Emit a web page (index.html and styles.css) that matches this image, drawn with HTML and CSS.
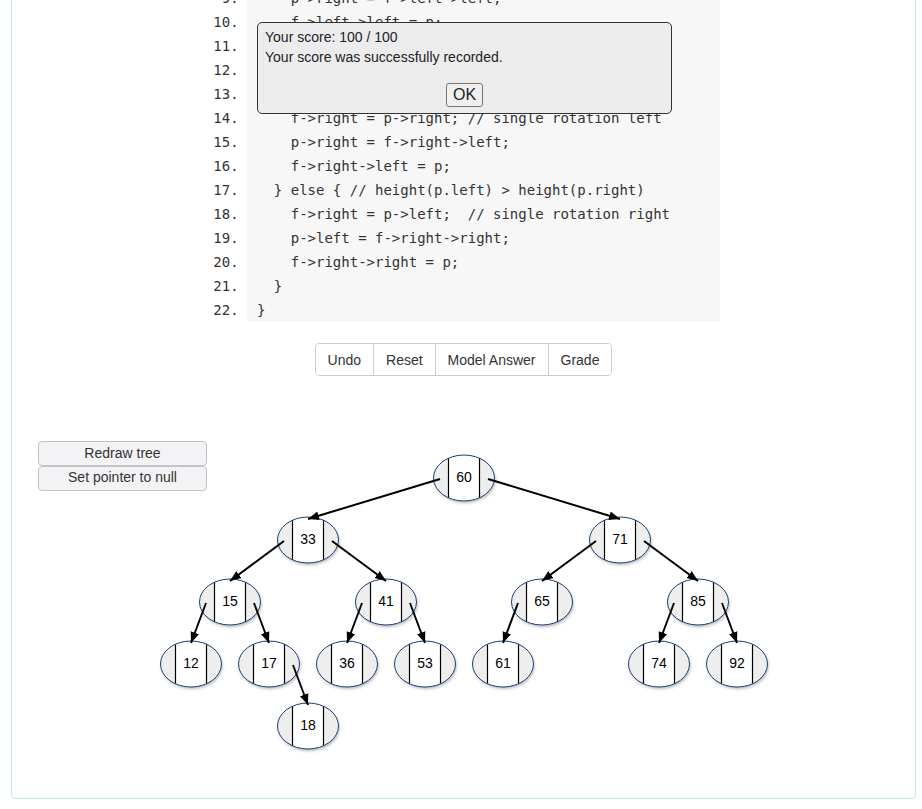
FILE: index.html
```html
<!DOCTYPE html>
<html lang="en">
<head>
  <meta charset="UTF-8" />
  <title>AVL Rotation Exercise</title>
  <link rel="stylesheet" href="styles.css">
</head>
<body>
  <div class="container">
    <ol class="code">
      <li>void rebalance(Node *f, Node *p) {</li>
      <li>  // p is the unbalanced child of f</li>
      <li>  if (p == f->left) {</li>
      <li>    f->left = p->right;  // single rotation left</li>
      <li>    p->right = f->left->left;</li>
      <li>    f->left->left = p;</li>
      <li>  } else {</li>
      <li>    f->left = p->left;</li>
      <li>    p->right = f->left->left;</li>
      <li>    f->left->left = p;</li>
      <li>  }</li>
      <li>  return;</li>
      <li>  if (height(p.left) &lt; height(p.right)) {</li>
      <li>    f->right = p->right; // single rotation left</li>
      <li>    p->right = f->right->left;</li>
      <li>    f->right->left = p;</li>
      <li>  } else { // height(p.left) &gt; height(p.right)</li>
      <li>    f->right = p->left;  // single rotation right</li>
      <li>    p->left = f->right->right;</li>
      <li>    f->right->right = p;</li>
      <li>  }</li>
      <li>}</li>
    </ol>

    <div class="controls">
      <div class="button-group">
        <button>Undo</button>
        <button>Reset</button>
        <button>Model Answer</button>
        <button>Grade</button>
      </div>
    </div>

    <div class="tree-area">
      <div class="tree-buttons">
        <button>Redraw tree</button>
        <button>Set pointer to null</button>
      </div>

      <svg class="tree" width="851" height="320" viewBox="38 441 851 320">
        <defs>
          <marker id="arrow" viewBox="0 0 10 10" refX="10" refY="5" markerWidth="11" markerHeight="11" markerUnits="userSpaceOnUse" orient="auto">
            <path d="M0 1 L10 5 L0 9 Z" fill="#000"/>
          </marker>
          <clipPath id="node-clip">
            <ellipse rx="30.5" ry="23"/>
          </clipPath>
          <filter id="shadow" x="-30%" y="-30%" width="160%" height="170%">
            <feDropShadow dx="1" dy="2" stdDeviation="1.6" flood-color="#000" flood-opacity="0.28"/>
          </filter>
          <g id="node">
            <ellipse rx="30.5" ry="23" fill="#eee" filter="url(#shadow)"/>
            <rect x="-15.5" y="-23" width="31" height="46" fill="#fff" clip-path="url(#node-clip)"/>
            <line x1="-15.5" y1="-19.8" x2="-15.5" y2="19.8" class="divider"/>
            <line x1="15.5" y1="-19.8" x2="15.5" y2="19.8" class="divider"/>
            <ellipse rx="30.5" ry="23" class="node-border"/>
          </g>
        </defs>

        <!-- nodes -->
        <use href="#node" x="464" y="478"/>
        <use href="#node" x="308" y="540"/>
        <use href="#node" x="620" y="540"/>
        <use href="#node" x="230" y="602"/>
        <use href="#node" x="386" y="602"/>
        <use href="#node" x="542" y="602"/>
        <use href="#node" x="698" y="602"/>
        <use href="#node" x="191" y="664"/>
        <use href="#node" x="269" y="664"/>
        <use href="#node" x="347" y="664"/>
        <use href="#node" x="425" y="664"/>
        <use href="#node" x="503" y="664"/>
        <use href="#node" x="659" y="664"/>
        <use href="#node" x="737" y="664"/>
        <use href="#node" x="308" y="726"/>

        <g class="node-label">
          <text x="464" y="477">60</text>
          <text x="308" y="539">33</text>
          <text x="620" y="539">71</text>
          <text x="230" y="601">15</text>
          <text x="386" y="601">41</text>
          <text x="542" y="601">65</text>
          <text x="698" y="601">85</text>
          <text x="191" y="663">12</text>
          <text x="269" y="663">17</text>
          <text x="347" y="663">36</text>
          <text x="425" y="663">53</text>
          <text x="503" y="663">61</text>
          <text x="659" y="663">74</text>
          <text x="737" y="663">92</text>
          <text x="308" y="725">18</text>
        </g>

        <!-- pointers -->
        <g class="edges">
          <line x1="440" y1="479" x2="308" y2="519"/>
          <line x1="488" y1="479" x2="620" y2="519"/>
          <line x1="284" y1="541" x2="230" y2="581"/>
          <line x1="332" y1="541" x2="386" y2="581"/>
          <line x1="596" y1="541" x2="542" y2="581"/>
          <line x1="644" y1="541" x2="698" y2="581"/>
          <line x1="206" y1="603" x2="191" y2="643"/>
          <line x1="254" y1="603" x2="269" y2="643"/>
          <line x1="362" y1="603" x2="347" y2="643"/>
          <line x1="410" y1="603" x2="425" y2="643"/>
          <line x1="518" y1="603" x2="503" y2="643"/>
          <line x1="674" y1="603" x2="659" y2="643"/>
          <line x1="722" y1="603" x2="737" y2="643"/>
          <line x1="293" y1="665" x2="308" y2="705"/>
        </g>
      </svg>
    </div>
  </div>

  <div class="dialog">
    <p>Your score: 100 / 100</p>
    <p>Your score was successfully recorded.</p>
    <div class="dialog-actions">
      <button class="ok-button">OK</button>
    </div>
  </div>
</body>
</html>
```

FILE: styles.css
```css
* {
  margin: 0;
  padding: 0;
  box-sizing: border-box;
}

body {
  font-family: 'Liberation Sans', Arial, sans-serif;
  color: #333;
  background: #fff;
  overflow: hidden;
}

.container {
  margin: -227px 6px 10px 11px;
  border: 1px solid #c4e4ea;
  border-radius: 4px;
  padding: 20px 26px 37px;
}

.code {
  width: 513px;
  margin: 0 auto;
  padding-left: 40px;
  list-style: decimal outside;
  font-family: 'DejaVu Sans Mono', monospace;
  font-size: 14px;
  line-height: 24px;
  color: #333;
}

.code li {
  padding-left: 10px;
  background: #f7f7f7;
  white-space: pre;
}

.code li::marker {
  color: #333;
}

.controls {
  display: flex;
  justify-content: center;
  margin-top: 21px;
}

.button-group {
  display: inline-flex;
  border: 1px solid #ccc;
  border-radius: 4px;
  overflow: hidden;
}

.button-group button {
  border: none;
  border-left: 1px solid #ccc;
  background: #fff;
  color: #333;
  font-family: inherit;
  font-size: 14px;
  line-height: 19px;
  padding: 7px 12px 5px;
}

.button-group button:first-child {
  border-left: none;
}

.tree-area {
  display: grid;
  margin-top: 65px;
}

.tree-area > * {
  grid-area: 1 / 1;
}

.tree-buttons {
  display: flex;
  flex-direction: column;
  width: 169px;
  align-self: start;
  justify-self: start;
  z-index: 1;
}

.tree-buttons button {
  height: 25px;
  padding-bottom: 2px;
  border: 1px solid #c3c3c9;
  border-radius: 4px;
  background: #f3f3f5;
  color: #333;
  font-family: inherit;
  font-size: 14px;
}

.tree-buttons button + button {
  margin-top: -0.5px;
}

.tree {
  display: block;
}

.divider {
  stroke: #000;
  stroke-width: 1.2;
}

.node-border {
  fill: none;
  stroke: #1b3e79;
  stroke-width: 1;
}

.node-label text {
  font-family: 'Liberation Sans', Arial, sans-serif;
  font-size: 14px;
  fill: #000;
  text-anchor: middle;
  dominant-baseline: central;
}

.edges line {
  stroke: #000;
  stroke-width: 2;
  marker-end: url(#arrow);
}

.dialog {
  position: absolute;
  top: 22px;
  left: 257px;
  width: 415px;
  height: 92px;
  padding: 4px 7px 0;
  background: #ececec;
  border: 1px solid #333;
  border-radius: 5px;
  font-size: 14px;
  line-height: 20px;
  color: #222;
}

.dialog-actions {
  display: flex;
  justify-content: center;
  margin-top: 16px;
}

.ok-button {
  height: 24px;
  padding: 0 6px;
  border: 1px solid #767676;
  border-radius: 3px;
  background: #efefef;
  color: #222;
  font-family: inherit;
  font-size: 16px;
}
```
